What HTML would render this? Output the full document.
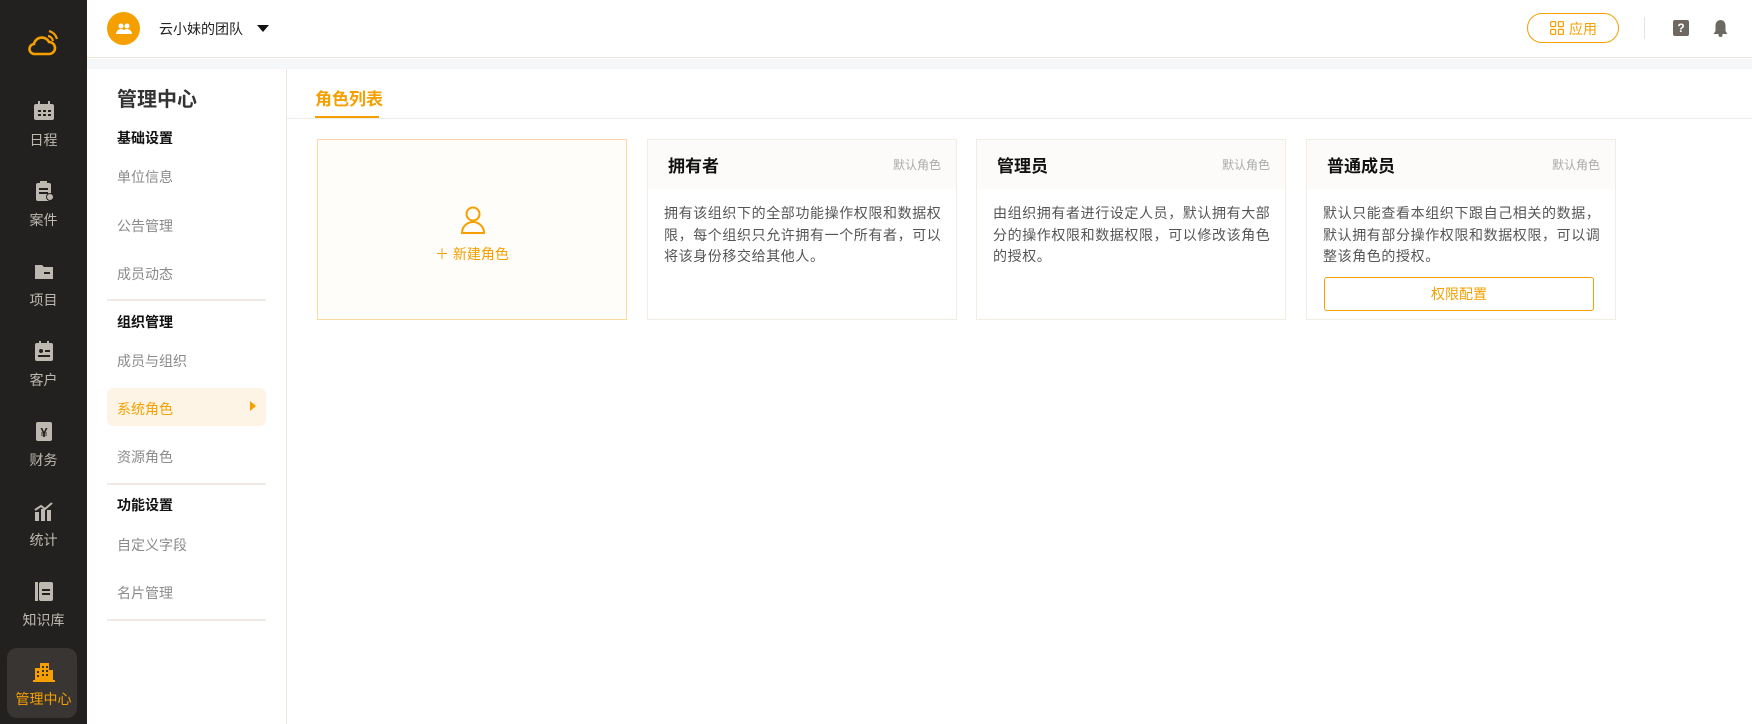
<!DOCTYPE html>
<html><head><meta charset="utf-8"><style>
*{margin:0;padding:0;box-sizing:border-box}
body{width:1752px;height:724px;overflow:hidden;background:#fff;font-family:"Liberation Sans","Noto Sans CJK SC",sans-serif;position:relative}
.abs{position:absolute}
#side{left:0;top:0;width:87px;height:724px;background:#232120}
.nav{position:absolute;left:0;width:87px;text-align:center;color:#bdb8b0;font-size:14px}
.nav svg{display:block;margin:0 auto 9px}
#top{left:87px;top:0;width:1665px;height:58px;border-bottom:1px solid #ece6dc;background:#fff}
#strip{left:87px;top:59px;width:1665px;height:10px;background:#f6f7f9}
#lp{left:87px;top:69px;width:200px;height:655px;border-right:1px solid #ece6dc}
.mi{position:absolute;left:30px;font-size:14px;color:#8a8a8a}
.mh{position:absolute;left:30px;font-size:14px;color:#111;font-weight:bold}
.dv{position:absolute;left:20px;width:159px;height:2px;background:#eeebe6}
.card{position:absolute;top:139px;width:310px;height:181px;border:1px solid #f1ece4;background:#fff}
.ch{height:49px;background:#fcfbf9;position:relative}
.ch b{position:absolute;left:20px;top:12px;font-size:17px;color:#111}
.ch span{position:absolute;right:15px;top:16px;font-size:12px;color:#aaa}
.cb{padding:14px 14px 0 16px;font-size:14px;line-height:21.5px;color:#555;letter-spacing:0.6px}
</style></head><body>
<div id="side" class="abs">
<svg class="abs" style="left:28px;top:30px" width="30" height="28" viewBox="0 0 30 28"><path d="M7 24h14a6 6 0 0 0 0-12 8 8 0 0 0-15 2 5 5 0 0 0 1 10z" fill="none" stroke="#f5a000" stroke-width="2.6"/><path d="M20 6a6 6 0 0 1 5 5M21 1a11 11 0 0 1 8 8" fill="none" stroke="#f5a000" stroke-width="2.2"/></svg>
<div class="nav" style="top:101px"><svg width="22" height="20"><rect x="1" y="3" width="20" height="16" rx="2" fill="#bdb8b0"/><rect x="5" y="0" width="2" height="5" fill="#bdb8b0"/><rect x="15" y="0" width="2" height="5" fill="#bdb8b0"/><g fill="#232120"><rect x="5" y="9" width="3" height="2"/><rect x="10" y="9" width="3" height="2"/><rect x="15" y="9" width="3" height="2"/><rect x="5" y="13" width="3" height="2"/><rect x="10" y="13" width="3" height="2"/><rect x="15" y="13" width="3" height="2"/></g></svg>日程</div>
<div class="nav" style="top:181px"><svg width="22" height="20"><rect x="3" y="2" width="15" height="18" rx="2" fill="#bdb8b0"/><rect x="7" y="0" width="7" height="4" fill="#bdb8b0"/><g fill="#232120"><rect x="6" y="7" width="9" height="2"/><rect x="6" y="11" width="9" height="2"/></g><circle cx="17" cy="16" r="3.5" fill="#bdb8b0" stroke="#232120"/></svg>案件</div>
<div class="nav" style="top:261px"><svg width="22" height="20"><path d="M2 4h7l2 2h9v12H2z" fill="#bdb8b0"/><rect x="11" y="11" width="6" height="2" fill="#232120"/></svg>项目</div>
<div class="nav" style="top:341px"><svg width="22" height="20"><rect x="2" y="2" width="18" height="18" rx="2" fill="#bdb8b0"/><rect x="6" y="0" width="2" height="4" fill="#bdb8b0"/><rect x="14" y="0" width="2" height="4" fill="#bdb8b0"/><circle cx="8" cy="10" r="2" fill="#232120"/><rect x="12" y="9" width="5" height="2" fill="#232120"/><rect x="5" y="14" width="12" height="2" fill="#232120"/></svg>客户</div>
<div class="nav" style="top:421px"><svg width="22" height="20"><rect x="3" y="1" width="16" height="19" rx="2" fill="#bdb8b0"/><text x="11" y="16" text-anchor="middle" font-size="13" font-weight="bold" fill="#232120">¥</text></svg>财务</div>
<div class="nav" style="top:501px"><svg width="22" height="20"><g fill="#bdb8b0"><rect x="2" y="11" width="4" height="9"/><rect x="8" y="8" width="4" height="12"/><rect x="14" y="9" width="4" height="11"/></g><path d="M2 9l6-4 4 3 7-6" fill="none" stroke="#bdb8b0" stroke-width="2"/></svg>统计</div>
<div class="nav" style="top:581px"><svg width="22" height="20"><rect x="2" y="1" width="3" height="19" fill="#bdb8b0"/><rect x="6" y="1" width="14" height="19" rx="2" fill="#bdb8b0"/><rect x="9" y="8" width="8" height="2" fill="#232120"/><rect x="9" y="12" width="8" height="2" fill="#232120"/></svg>知识库</div>
<div class="abs" style="left:7px;top:648px;width:70px;height:70px;border-radius:10px;background:#383532"></div>
<div class="nav" style="top:660px;color:#f5a000"><svg width="22" height="22" style="margin-bottom:7px"><path d="M2 20V8h5V3h9v17z" fill="#f5a000"/><path d="M16 10h4v10h-4z" fill="#f5a000"/><g fill="#383532"><rect x="9" y="6" width="2" height="2"/><rect x="13" y="6" width="2" height="2"/><rect x="9" y="10" width="2" height="2"/><rect x="13" y="10" width="2" height="2"/><rect x="9" y="14" width="2" height="2"/><rect x="13" y="14" width="2" height="2"/><rect x="4" y="11" width="2" height="2"/><rect x="4" y="15" width="2" height="2"/></g><rect x="0" y="20" width="22" height="2" fill="#f5a000"/></svg>管理中心</div>
</div>
<div id="top" class="abs">
<div class="abs" style="left:20px;top:12px;width:33px;height:33px;border-radius:50%;background:#f5a000"></div>
<svg class="abs" style="left:29px;top:22px" width="16" height="12"><circle cx="5" cy="4" r="2.5" fill="#fff"/><circle cx="11" cy="4" r="2.5" fill="#fff"/><path d="M0 12a5 5 0 0 1 10 0zM6 12a5 5 0 0 1 10 0z" fill="#fff"/></svg>
<div class="abs" style="left:72px;top:19px;font-size:14px;color:#222">云小妹的团队</div>
<div class="abs" style="left:170px;top:25px;width:0;height:0;border-left:6px solid transparent;border-right:6px solid transparent;border-top:7px solid #111"></div>
<div class="abs" style="left:1440px;top:13px;width:92px;height:30px;border:1px solid #f5a000;border-radius:15px"></div>
<svg class="abs" style="left:1463px;top:21px" width="14" height="14"><g fill="none" stroke="#f5a000" stroke-width="1.2"><rect x="0.6" y="0.6" width="5" height="5" rx="1"/><rect x="8.4" y="0.6" width="5" height="5" rx="1"/><rect x="0.6" y="8.4" width="5" height="5" rx="1"/><rect x="8.4" y="8.4" width="5" height="5" rx="1"/></g></svg>
<div class="abs" style="left:1482px;top:19px;font-size:14px;color:#f5a000">应用</div>
<div class="abs" style="left:1557px;top:17px;width:1px;height:22px;background:#e6e2dc"></div>
<div class="abs" style="left:1586px;top:20px;width:16px;height:16px;background:#6e6862;border-radius:2px;color:#fff;font-size:12px;font-weight:bold;text-align:center;line-height:16px">?</div>
<svg class="abs" style="left:1626px;top:19px" width="15" height="18"><path d="M7.5 1a5 5 0 0 1 5 5v6l2 3H.5l2-3V6a5 5 0 0 1 5-5z" fill="#6e6862"/><circle cx="7.5" cy="16" r="2" fill="#6e6862"/></svg>
</div>
<div id="strip" class="abs"></div>
<div id="lp" class="abs">
<div class="abs" style="left:30px;top:14px;font-size:20px;font-weight:bold;color:#333">管理中心</div>
<div class="mh" style="top:59px">基础设置</div>
<div class="mi" style="top:98px">单位信息</div>
<div class="mi" style="top:147px">公告管理</div>
<div class="mi" style="top:195px">成员动态</div>
<div class="dv" style="top:230px"></div>
<div class="mh" style="top:243px">组织管理</div>
<div class="mi" style="top:282px">成员与组织</div>
<div class="abs" style="left:20px;top:319px;width:159px;height:38px;background:#fdf4e6;border-radius:6px"></div>
<div class="mi" style="top:330px;color:#f5a000">系统角色</div>
<div class="abs" style="left:163px;top:332px;border-top:5px solid transparent;border-bottom:5px solid transparent;border-left:6px solid #f5a000"></div>
<div class="mi" style="top:378px">资源角色</div>
<div class="dv" style="top:414px"></div>
<div class="mh" style="top:426px">功能设置</div>
<div class="mi" style="top:466px">自定义字段</div>
<div class="mi" style="top:514px">名片管理</div>
<div class="dv" style="top:550px"></div>
</div>
<div class="abs" style="left:315px;top:85px;font-size:17px;color:#f5a000;font-weight:bold">角色列表</div>
<div class="abs" style="left:315px;top:116px;width:64px;height:3px;background:#f5a000"></div>
<div class="abs" style="left:287px;top:118px;width:1465px;height:1px;background:#efebe6"></div>
<div class="card" style="left:317px;background:#fffdf9;border-color:#fcd9a0">
<svg class="abs" style="left:142px;top:66px" width="26" height="28"><circle cx="13" cy="8" r="6.5" fill="none" stroke="#f5a000" stroke-width="2"/><path d="M2 27a11 11 0 0 1 22 0z" fill="none" stroke="#f5a000" stroke-width="2"/></svg>
<div class="abs" style="left:0;width:308px;top:104px;text-align:center;color:#f5a000;font-size:14px">＋ 新建角色</div>
</div>
<div class="card" style="left:647px"><div class="ch"><b>拥有者</b><span>默认角色</span></div><div class="cb">拥有该组织下的全部功能操作权限和数据权限，每个组织只允许拥有一个所有者，可以将该身份移交给其他人。</div></div>
<div class="card" style="left:976px"><div class="ch"><b>管理员</b><span>默认角色</span></div><div class="cb">由组织拥有者进行设定人员，默认拥有大部分的操作权限和数据权限，可以修改该角色的授权。</div></div>
<div class="card" style="left:1306px"><div class="ch"><b>普通成员</b><span>默认角色</span></div><div class="cb">默认只能查看本组织下跟自己相关的数据，默认拥有部分操作权限和数据权限，可以调整该角色的授权。</div>
<div class="abs" style="left:17px;top:137px;width:270px;height:34px;border:1px solid #f5a000;border-radius:3px;color:#f5a000;font-size:14px;text-align:center;line-height:32px">权限配置</div></div>
</body></html>
